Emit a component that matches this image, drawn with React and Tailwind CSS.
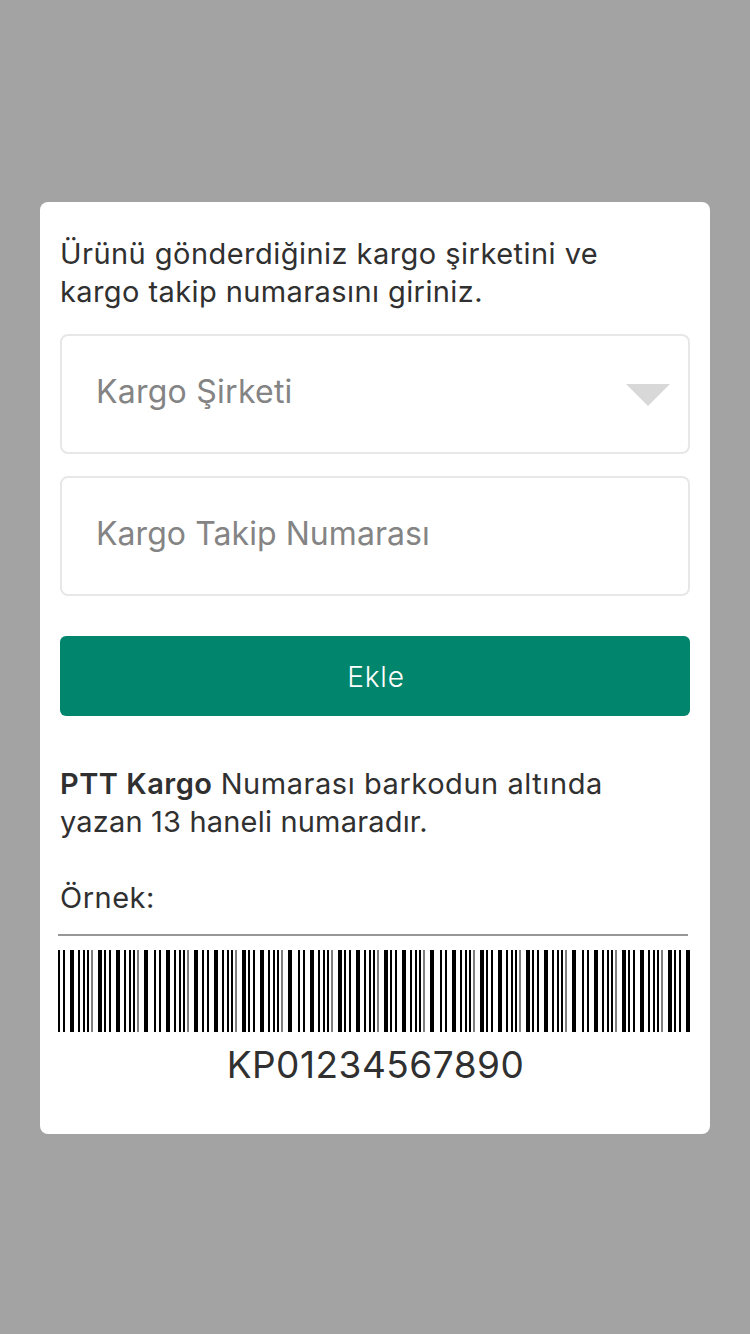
import React from "react";

// [offset from the left edge, width, kind]
const T = 2;
const W = 4;
const bars = [
  [58, T], [63, T], [70, W], [78, T], [83, T], [87, T], [91, T, "g"], [98, W], [104, T], [109, T],
  [116, W], [124, T], [129, T], [133, T], [137, T, "g"], [144, W], [154, T], [159, T], [166, W],
  [174, T], [179, T], [183, T], [187, T, "g"], [194, W], [202, T], [207, T], [214, W], [222, T],
  [227, T], [231, T], [235, T, "g"], [242, W], [248, T], [253, T], [260, W], [268, T], [273, T],
  [277, T], [281, T, "g"], [288, W], [298, T], [303, T], [310, W], [318, T], [323, T], [327, T],
  [331, T, "g"], [338, W], [344, T], [349, T], [356, W], [364, T], [369, T], [373, T], [377, T, "g"],
  [384, W], [390, T], [395, T], [402, W], [410, T], [415, T], [419, T], [423, T, "g"], [430, W],
  [440, T], [445, T], [452, W], [460, T], [465, T], [469, T], [473, T, "g"], [480, W], [486, T],
  [491, T], [498, W], [506, T], [511, T], [515, T], [519, T, "g"], [526, W], [532, T], [537, T],
  [544, W], [552, T], [557, T], [561, T], [565, T, "g"], [572, W], [582, T], [587, T], [594, W],
  [602, T], [607, T], [611, T], [615, T, "g"], [622, W], [628, T], [633, T], [640, W], [648, T],
  [653, T], [657, T], [661, T, "g"], [668, W], [674, T], [679, T], [686, W],
];

function Barcode() {
  return (
    <svg className="block h-[82px] w-[632px]" viewBox="58 0 632 82" shapeRendering="crispEdges">
      {bars.map(([x, w, kind]) => (
        <rect key={x} x={x} y="0" width={w} height="82" fill={kind === "g" ? "#808080" : "#000"} />
      ))}
    </svg>
  );
}

export default function App() {
  return (
    <div className="flex h-[1334px] w-[750px] flex-col bg-[#a3a3a3] px-10 pt-[202px] font-['Inter','Liberation_Sans',sans-serif] font-normal text-[#303030]">
      <div className="flex h-[932px] flex-col rounded-lg bg-white px-5 pt-[33px]">
        <p className="whitespace-nowrap text-[29px] leading-[38px]">
          <span className="block tracking-[0.46px]">Ürünü gönderdiğiniz kargo şirketini ve</span>
          <span className="block tracking-[0.41px]">kargo takip numarasını giriniz.</span>
        </p>
        <button className="mt-[23px] flex h-[120px] shrink-0 items-center justify-between rounded-lg border-2 border-[#e7e7e7] pl-[34px] pr-[18px] pb-1 text-left text-[32px] text-[#848484]">
          <span className="tracking-[0.25px]">Kargo Şirketi</span>
          <svg className="mt-1.5 h-[22px] w-11" viewBox="0 0 44 22">
            <path d="M0 0h44L22 22z" fill="#d8d8d8" />
          </svg>
        </button>
        <div className="mt-[22px] flex h-[120px] shrink-0 items-center rounded-lg border-2 border-[#e7e7e7] pl-[34px] pb-1 text-[32px] text-[#848484]">
          <span className="tracking-[0.06px]">Kargo Takip Numarası</span>
        </div>
        <button className="mt-10 flex h-20 shrink-0 items-center justify-center rounded-md bg-[#01856c] pl-0.5 pt-0.5 text-[28px] font-light tracking-[0.8px] text-white">
          Ekle
        </button>
        <p className="mt-[49px] whitespace-nowrap text-[29px] leading-[38px]">
          <span className="block">
            <b className="font-semibold tracking-[0.5px]">PTT Kargo</b> <span className="tracking-[0.55px]">Numarası barkodun altında</span>
          </span>
          <span className="block tracking-[0.18px]">yazan 13 haneli numaradır.</span>
        </p>
        <p className="mt-[38px] text-[29px] leading-[38px] tracking-[0.5px]">Örnek:</p>
        <div className="-ml-0.5 mt-[17px] flex w-[632px] flex-col">
          <div className="mb-3.5 h-0.5 w-[630px] bg-[#979797]" />
          <Barcode />
          <div className="mt-2.5 pl-[3px] text-center text-[37px] leading-[46px] tracking-[0.5px]">KP01234567890</div>
        </div>
      </div>
    </div>
  );
}
